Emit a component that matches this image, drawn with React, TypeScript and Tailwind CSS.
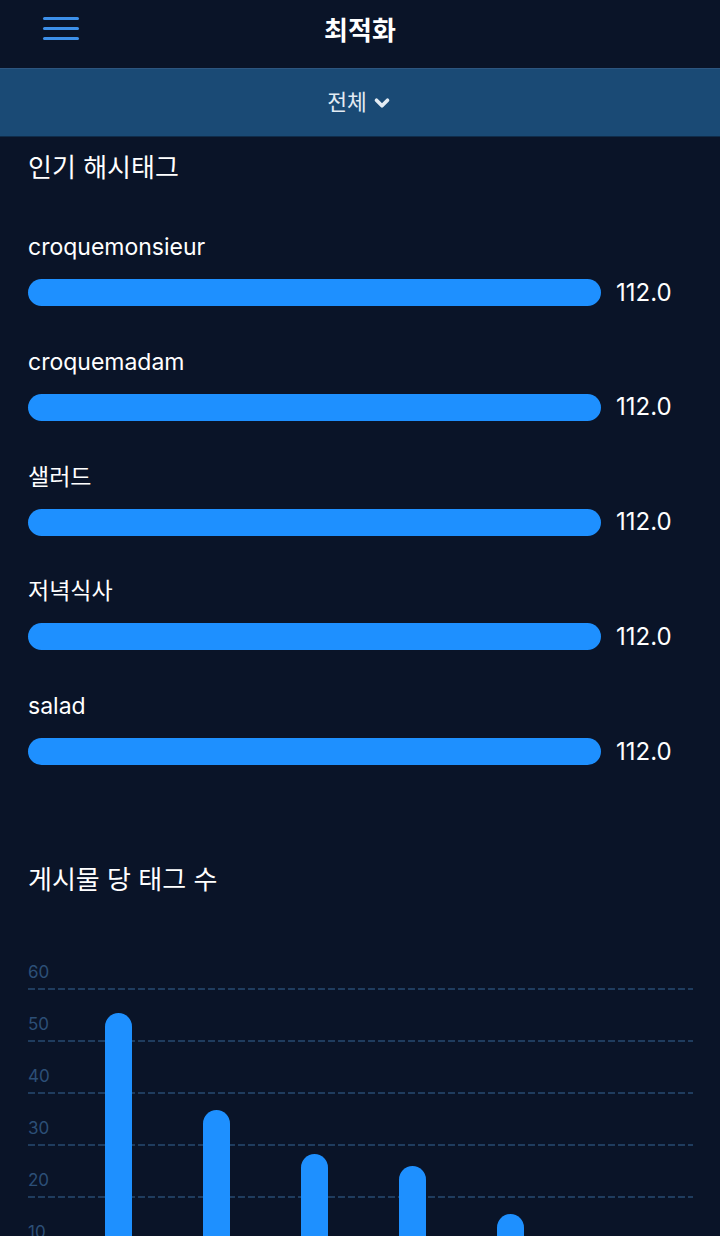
import React from 'react'
import { ChevronDown } from 'lucide-react'

const tags = ['croquemonsieur', 'croquemadam', '샐러드', '저녁식사', 'salad']

const gridLines = [
  { label: '60', y: 59 },
  { label: '50', y: 111 },
  { label: '40', y: 163 },
  { label: '30', y: 215 },
  { label: '20', y: 267 },
  { label: '10', y: 319 },
]

const bars = [
  { x: 105, top: 83 },
  { x: 203, top: 180 },
  { x: 301, top: 224 },
  { x: 399, top: 236 },
  { x: 497, top: 284 },
]

const font = { fontFamily: 'Inter, "Noto Sans CJK KR", sans-serif' }

const App = () => {
  return (
    <div className="w-[720px] h-[1236px] overflow-hidden bg-[#0a1428] text-white" style={font}>
      {/* header */}
      <div className="relative h-[68px] flex items-center justify-center pb-[6px]">
        <button className="absolute left-[43px] top-[17px] flex flex-col gap-[7px]">
          <span className="block w-[36px] h-[3px] rounded-full bg-[#3d90ea]" />
          <span className="block w-[36px] h-[3px] rounded-full bg-[#3d90ea]" />
          <span className="block w-[36px] h-[3px] rounded-full bg-[#3d90ea]" />
        </button>
        <h1 className="text-[26px] font-bold leading-none">최적화</h1>
      </div>

      {/* filter bar */}
      <div className="h-[69px] bg-[#1a4a75] border-t border-[#2d5680] border-b border-b-[#0f2c4a] flex items-center justify-center gap-[4px] text-[#e3ebf3]">
        <span className="text-[21.5px] leading-none">전체</span>
        <ChevronDown size={22} strokeWidth={4} />
      </div>

      <div className="px-[28px]">
        <h2 className="mt-[17px] text-[26px] leading-[28px]">인기 해시태그</h2>

        <ul className="mt-[50px] flex flex-col gap-[40.75px]">
          {tags.map((t) => (
            <li key={t}>
              <p className="text-[23px] leading-[30px]">{t}</p>
              <div className="mt-[17px] flex items-center">
                <div className="h-[27px] w-[573px] rounded-full bg-[#1e90ff]" />
                <span className="ml-[15px] text-[24px] leading-none">112.0</span>
              </div>
            </li>
          ))}
        </ul>

        <h2 className="mt-[101px] text-[26px] leading-[28px]">게시물 당 태그 수</h2>
      </div>

      {/* chart */}
      <svg width="720" height="400" className="mt-[36px] block">
        {gridLines.map((g) => (
          <g key={g.label}>
            <text x="28" y={g.y - 11} fill="#2c4f77" fontSize="17" fontFamily="Inter, sans-serif">
              {g.label}
            </text>
            <line x1="28" x2="693" y1={g.y} y2={g.y} stroke="#274a70" strokeWidth="1.5" strokeDasharray="7 3" />
          </g>
        ))}
        {bars.map((b) => (
          <rect key={b.x} x={b.x} y={b.top} width="27" height={400 - b.top + 20} rx="13.5" fill="#1e90ff" />
        ))}
      </svg>
    </div>
  )
}

export default App
